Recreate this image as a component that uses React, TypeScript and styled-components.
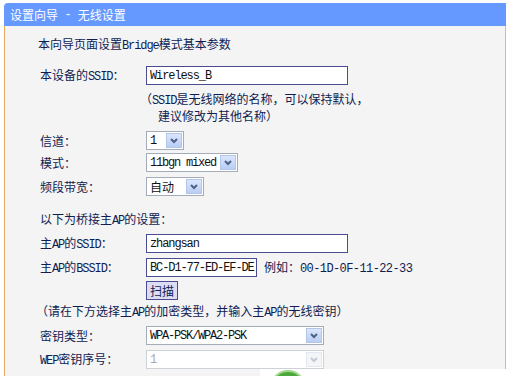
import React from 'react';
import styled, { createGlobalStyle } from 'styled-components';

const GlobalStyle = createGlobalStyle`
  html, body {
    margin: 0;
    padding: 0;
    background: #fff;
  }
  body {
    font-family: "Noto Sans CJK SC", "Liberation Sans", sans-serif;
    font-size: 12px;
  }
`;

const Page = styled.div`
  position: relative;
  width: 510px;
  height: 376px;
  padding: 3px 4px 0 4px;
  box-sizing: border-box;
  overflow: hidden;
`;

const Panel = styled.div`
  width: 502px;
  height: 100%;
  display: flex;
  flex-direction: column;
`;

const Header = styled.div`
  height: 23px;
  flex: none;
  display: flex;
  align-items: center;
  padding-left: 6px;
  background: #6699ff;
  border-top-left-radius: 4px;
  color: #fff;
  font-size: 12px;
  white-space: pre;
`;

const Body = styled.div`
  flex: 1;
  padding: 10px 0 0 35px;
  background: #f4f4f4;
  border-left: 1px solid #e6a862;
  border-right: 1px solid #e8b67c;
  color: #101c52;
  font-size: 12px;
  line-height: 16px;
`;

const TextLine = styled.div<{ $mt: number; $indent?: number }>`
  height: 16px;
  margin-top: ${p => p.$mt}px;
  margin-left: ${p => p.$indent ?? 0}px;
  white-space: nowrap;
`;

const Help = styled.div`
  margin-top: 5px;
  margin-left: 100px;
  white-space: nowrap;
`;

const HelpLine = styled.div<{ $indent?: number }>`
  height: 17px;
  line-height: 17px;
  padding-left: ${p => p.$indent ?? 0}px;
`;

const Row = styled.div<{ $mt: number }>`
  display: flex;
  align-items: center;
  height: 19px;
  margin-top: ${p => p.$mt}px;
`;

const Label = styled.div`
  width: 106px;
  flex: none;
  white-space: nowrap;
`;

const Latin = styled.span<{ $wide?: boolean }>`
  font-family: "Liberation Mono", monospace;
  font-size: 12px;
  letter-spacing: ${p => (p.$wide ? -0.6 : -1.1)}px;
  white-space: pre;
`;

const TextInput = styled.input<{ $w: number }>`
  width: ${p => p.$w}px;
  height: 19px;
  box-sizing: border-box;
  margin: 0;
  padding: 0 0 0 3px;
  border: 1px solid #4b4b8f;
  background: #fff;
  color: #111;
  font-family: "Liberation Mono", monospace;
  font-size: 12px;
  letter-spacing: -1.1px;
  outline: none;
`;

const SelectBox = styled.div<{ $w: number; $disabled?: boolean }>`
  width: ${p => p.$w}px;
  height: 19px;
  box-sizing: border-box;
  display: flex;
  align-items: center;
  justify-content: space-between;
  padding: 0 1px 0 3px;
  border: 1px solid ${p => (p.$disabled ? '#cdd2d9' : '#a3acb8')};
  background: #fff;
  color: ${p => (p.$disabled ? '#a8a8a8' : '#111')};
`;

const SelectValue = styled.span<{ $latin?: boolean }>`
  white-space: nowrap;
  font-family: ${p => (p.$latin ? '"Liberation Mono", monospace' : '"Noto Sans CJK SC", sans-serif')};
  font-size: 12px;
  letter-spacing: ${p => (p.$latin ? -1.2 : 0)}px;
`;

const ArrowBtn = styled.span<{ $disabled?: boolean }>`
  width: 16px;
  height: 15px;
  flex: none;
  display: flex;
  align-items: center;
  justify-content: center;
  box-sizing: border-box;
  border: 1px solid ${p => (p.$disabled ? '#e3e8f0' : '#b3c5ea')};
  background: ${p =>
    p.$disabled ? '#f3f5f9' : 'linear-gradient(#dbe6fc, #b9cdf4)'};
`;

const ScanButton = styled.button`
  width: 32px;
  height: 19px;
  margin: 0;
  padding: 0;
  border: 1px solid #4b4b8f;
  background: #dcdcf2;
  color: #101c52;
  font-family: "Noto Sans CJK SC", sans-serif;
  font-size: 12px;
  line-height: 16px;
`;

const Example = styled.span`
  margin-left: 7px;
  white-space: nowrap;
`;

const Dock = styled.div`
  position: absolute;
  left: 260px;
  top: 369px;
  right: 0;
  bottom: 0;
  background: #fff;
  overflow: hidden;
`;

const DockBall = styled.div`
  position: absolute;
  left: 10px;
  top: 1px;
  width: 36px;
  height: 36px;
  border-radius: 50%;
  box-sizing: border-box;
  background: #4ca83a;
  border: 2px solid #9fd88a;
`;

const Chevron = ({ disabled }: { disabled?: boolean }) => (
  <svg width="10" height="8" viewBox="0 0 10 8">
    <path
      d="M2 2 L5 5 L8 2"
      fill="none"
      stroke={disabled ? '#c3cad6' : '#4d6187'}
      strokeWidth="2"
    />
  </svg>
);

const Select = ({
  w,
  value,
  latin,
  disabled,
}: {
  w: number;
  value: string;
  latin?: boolean;
  disabled?: boolean;
}) => (
  <SelectBox $w={w} $disabled={disabled}>
    <SelectValue $latin={latin}>{value}</SelectValue>
    <ArrowBtn $disabled={disabled}>
      <Chevron disabled={disabled} />
    </ArrowBtn>
  </SelectBox>
);

const App = () => {
  return (
    <Page>
      <GlobalStyle />
      <Panel>
        <Header>
          设置向导<Latin $wide> - </Latin>无线设置
        </Header>
        <Body>
          <TextLine $mt={0} $indent={-2}>
            本向导页面设置<Latin>Bridge</Latin>模式基本参数
          </TextLine>

          <Row $mt={14}>
            <Label>
              本设备的<Latin>SSID</Latin>：
            </Label>
            <TextInput $w={202} value="Wireless_B" readOnly />
          </Row>
          <Help>
            <HelpLine>
              （<Latin>SSID</Latin>是无线网络的名称，可以保持默认，
            </HelpLine>
            <HelpLine $indent={18}>建议修改为其他名称）</HelpLine>
          </Help>

          <Row $mt={7}>
            <Label>信道：</Label>
            <Select w={38} value="1" latin />
          </Row>
          <Row $mt={3}>
            <Label>模式：</Label>
            <Select w={92} value="11bgn mixed" latin />
          </Row>
          <Row $mt={5}>
            <Label>频段带宽：</Label>
            <Select w={58} value="自动" />
          </Row>

          <TextLine $mt={15}>
            以下为桥接主<Latin>AP</Latin>的设置：
          </TextLine>
          <Row $mt={7}>
            <Label>
              主<Latin>AP</Latin>的<Latin>SSID</Latin>：
            </Label>
            <TextInput $w={202} value="zhangsan" readOnly />
          </Row>
          <Row $mt={5}>
            <Label>
              主<Latin>AP</Latin>的<Latin>BSSID</Latin>：
            </Label>
            <TextInput $w={111} value="BC-D1-77-ED-EF-DE" readOnly />
            <Example>
              例如：<Latin $wide>00-1D-0F-11-22-33</Latin>
            </Example>
          </Row>
          <Row $mt={4}>
            <Label />
            <ScanButton type="button">扫描</ScanButton>
          </Row>

          <TextLine $mt={3} $indent={-4}>
            （请在下方选择主<Latin>AP</Latin>的加密类型，并输入主<Latin>AP</Latin>的无线密钥）
          </TextLine>
          <Row $mt={7}>
            <Label>密钥类型：</Label>
            <Select w={178} value="WPA-PSK/WPA2-PSK" latin />
          </Row>
          <Row $mt={5}>
            <Label>
              <Latin>WEP</Latin>密钥序号：
            </Label>
            <Select w={178} value="1" latin disabled />
          </Row>
        </Body>
      </Panel>
      <Dock>
        <DockBall />
      </Dock>
    </Page>
  );
};

export default App;
